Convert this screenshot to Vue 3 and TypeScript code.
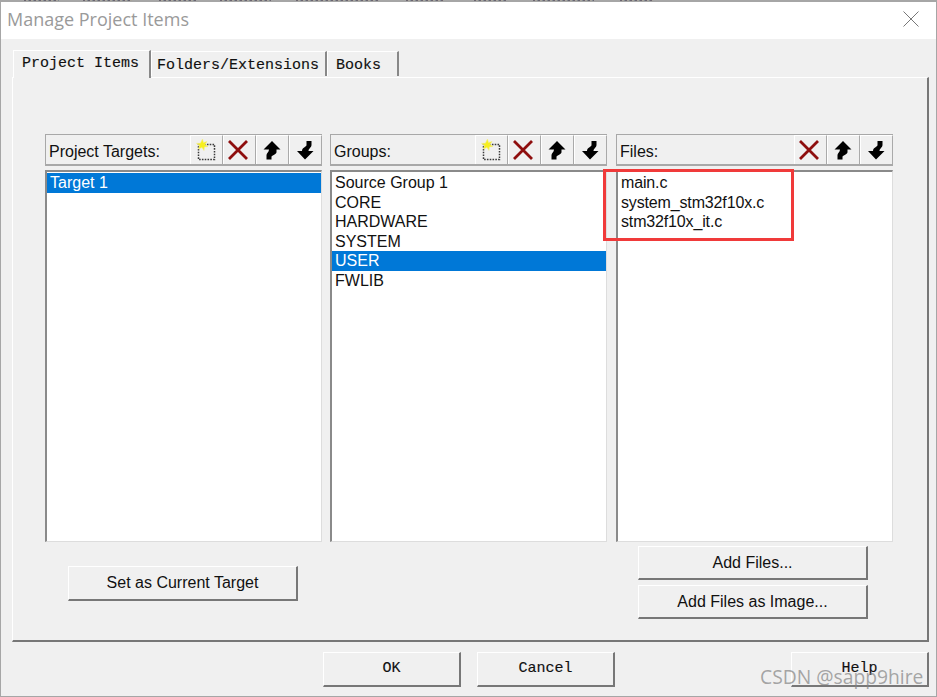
<script setup lang="ts">
interface Col { title: string; add: boolean; items: string[]; selected: number }
const columns: Col[] = [
  { title: 'Project Targets:', add: true, items: ['Target 1'], selected: 0 },
  { title: 'Groups:', add: true, items: ['Source Group 1', 'CORE', 'HARDWARE', 'SYSTEM', 'USER', 'FWLIB'], selected: 4 },
  { title: 'Files:', add: false, items: ['main.c', 'system_stm32f10x.c', 'stm32f10x_it.c'], selected: -1 },
]
// Cut-off remains of the menu bar of the window behind the dialog: [left, width]
const scraps: [number, number][] = [
  [24, 35], [83, 49], [159, 37], [220, 51], [296, 82], [406, 38], [474, 32], [533, 61], [620, 33],
]
</script>

<template>
  <div class="window">
    <div class="topedge">
      <i v-for="s in scraps" :key="s[0]" :style="{ left: s[0] + 'px', width: s[1] + 'px' }"></i>
    </div>
    <header class="titlebar">
      <span class="title">Manage Project Items</span>
      <svg class="close" width="16" height="16" viewBox="0 0 16 16"><path d="M.5.5l15 15M15.500.5l-15 15" stroke="#777" stroke-width="1" fill="none" /></svg>
    </header>
    <nav class="tabs">
      <div class="tab active">Project Items</div>
      <div class="tab t2">Folders/Extensions</div>
      <div class="tab t3">Books</div>
    </nav>
    <section class="panel">
      <div class="columns">
        <div v-for="(c, i) in columns" :key="c.title" class="col" :class="{ last: i === 2 }">
          <div class="head">
            <span class="label">{{ c.title }}</span>
            <div class="tools">
              <button v-if="c.add" class="tool">
                <svg width="24" height="24" viewBox="0 0 24 24">
                  <rect x="5.500" y="6.500" width="16" height="15" fill="none" stroke="#3a3a3a" stroke-width="1.500" stroke-dasharray="1.600 1.200" />
                  <path d="M9.500 1l1 3.500 3.500-1-2 3 3 2-3.600.4-.4 3.600-2-3-3.500 1.500 1-3.600-3-2 3.800-.2z" fill="#f7ef1e" stroke="#f3ee8a" stroke-width=".6" />
                </svg>
              </button>
              <button class="tool">
                <svg width="24" height="24" viewBox="0 0 24 24"><path d="M3 3l18 18M21 3L3 21" stroke="#8e0e0e" stroke-width="2.800" fill="none" /></svg>
              </button>
              <button class="tool">
                <svg width="24" height="24" viewBox="0 0 24 24"><path d="M13 3l8.500 8.500h-4V14c0 2-2.500 2.500-5 4.500v3h-5V17c0-2 2.500-3 2.500-5.500H4.500z" fill="#000" /></svg>
              </button>
              <button class="tool">
                <svg width="24" height="24" viewBox="0 0 24 24"><path d="M13 21.500L21.500 13h-5c0-2.500 3-3.500 3-6V3h-5v4c0 2-4.500 2.500-4.500 6h-5z" fill="#000" /></svg>
              </button>
            </div>
          </div>
          <ul class="list" :class="{ files: i === 2 }">
            <li v-for="(it, j) in c.items" :key="it" :class="{ sel: j === c.selected }">{{ it }}</li>
          </ul>
        </div>
      </div>
      <div class="actions">
        <button class="btn set">Set as Current Target</button>
        <div class="adds">
          <button class="btn">Add Files...</button>
          <button class="btn">Add Files as Image...</button>
        </div>
      </div>
    </section>
    <footer class="footer">
      <button class="btn mono">OK</button>
      <button class="btn mono cancel">Cancel</button>
      <button class="btn mono help">Help</button>
    </footer>
    <div class="highlight"></div>
    <div class="watermark">CSDN @sapp9hire</div>
  </div>
</template>

<style>
html, body { margin: 0; background: #f0f0f0; }
</style>

<style scoped>
.window {
  position: relative;
  box-sizing: border-box;
  width: 937px;
  height: 697px;
  overflow: hidden;
  background: #f0f0f0;
  border: 1px solid #a6a6a6;
  border-top: 0;
  font-family: "Liberation Sans", Arial, sans-serif;
  color: #111;
}
.topedge { position: relative; height: 2px; margin: 0 -1px; background: #a6a6a6; }
.topedge i {
  position: absolute;
  top: 0;
  height: 1px;
  background: repeating-linear-gradient(90deg, #6b6570 0 2px, #a8a49c 2px 4px, #7f8a94 4px 5px);
}
.titlebar {
  height: 37px;
  background: #fff;
  display: flex;
  align-items: center;
  justify-content: space-between;
  padding: 0 17px 0 6px;
}
.title { font: 18px "Open Sans", sans-serif; color: #9a9a9a; position: relative; top: -2px; }
.close { position: relative; top: -2px; }
.tabs {
  height: 38px;
  display: flex;
  align-items: flex-end;
  padding-left: 12px;
  font: 15px "Liberation Mono", monospace;
  -webkit-text-stroke: .15px #111;
}
.tab {
  box-sizing: border-box;
  height: 25px;
  padding: 5px 8px 0 5px;
  margin-bottom: 1px;
  border-top: 1px solid #fff;
  border-left: 1px solid #fff;
  border-right: 2px solid #888;
  white-space: nowrap;
}
.tab.active { height: 28px; margin-bottom: -1px; padding: 4px 10px 0 8px; width: 138px; position: relative; background: #f0f0f0; z-index: 1; }
.tab.t2 { width: 176px; }
.tab.t3 { width: 72px; padding-left: 8px; }
.panel {
  box-sizing: border-box;
  height: 565px;
  margin: 0 7px 0 11px;
  padding: 56px 32px 0 32px;
  border-top: 1px solid #fff;
  border-left: 1px solid #fff;
  border-right: 2px solid #777;
  border-bottom: 2px solid #777;
}
.columns { display: flex; gap: 8px; }
.col { width: 277px; }
.col.last { margin-left: 1px; }
.head {
  box-sizing: border-box;
  height: 32px;
  display: flex;
  align-items: center;
  justify-content: space-between;
  border-top: 1px solid #a8a8a8;
  border-left: 1px solid #a8a8a8;
  border-bottom: 2px solid #a8a8a8;
}
.label { font-size: 16px; padding: 4px 0 0 3px; }
.tools { display: flex; height: 100%; }
.tool {
  box-sizing: border-box;
  width: 33px;
  height: 100%;
  padding: 0 4px 0 0;
  display: flex;
  align-items: center;
  justify-content: center;
  background: #f0f0f0;
  border: 0;
  border-left: 1px solid #fff;
  border-top: 1px solid #fff;
  border-right: 1px solid #aaa;
}
.list {
  box-sizing: border-box;
  list-style: none;
  height: 372px;
  margin: 4px 0 0;
  padding: 1px 0 0;
  background: #fff;
  border-top: 2px solid #8a8a8a;
  border-left: 2px solid #8a8a8a;
  border-right: 1px solid #ddd;
  border-bottom: 1px solid #ddd;
  font-size: 16px;
}
.list.files { letter-spacing: -.15px; }
.list li { height: 19.600px; line-height: 19.600px; padding-left: 3px; white-space: nowrap; }
.list li.sel { background: #0078d7; color: #fff; }
.actions { display: flex; justify-content: space-between; padding: 4px 27px 0 23px; }
.adds { display: flex; flex-direction: column; gap: 5px; }
.btn {
  box-sizing: border-box;
  width: 230px;
  height: 34px;
  padding: 0;
  background: #f0f0f0;
  color: #111;
  font: 16px "Liberation Sans", Arial, sans-serif;
  border-top: 1px solid #fff;
  border-left: 1px solid #fff;
  border-right: 2px solid #777;
  border-bottom: 2px solid #777;
}
.btn.set { margin-top: 20px; height: 35px; }
.footer { display: flex; padding: 10px 7px 0 322px; }
.btn.mono { width: 138px; height: 35px; padding-bottom: 2px; font: 15px "Liberation Mono", monospace; -webkit-text-stroke: .15px #111; }
.btn.cancel { margin-left: 16px; }
.btn.help { margin-left: auto; }
.highlight {
  position: absolute;
  left: 602px;
  top: 169px;
  width: 185px;
  height: 66px;
  border: 3px solid #f03a3a;
}
.watermark {
  position: absolute;
  left: 759px;
  top: 663px;
  font: 19.300px "Open Sans", sans-serif;
  color: rgba(130, 130, 130, .7);
  white-space: nowrap;
}
</style>
